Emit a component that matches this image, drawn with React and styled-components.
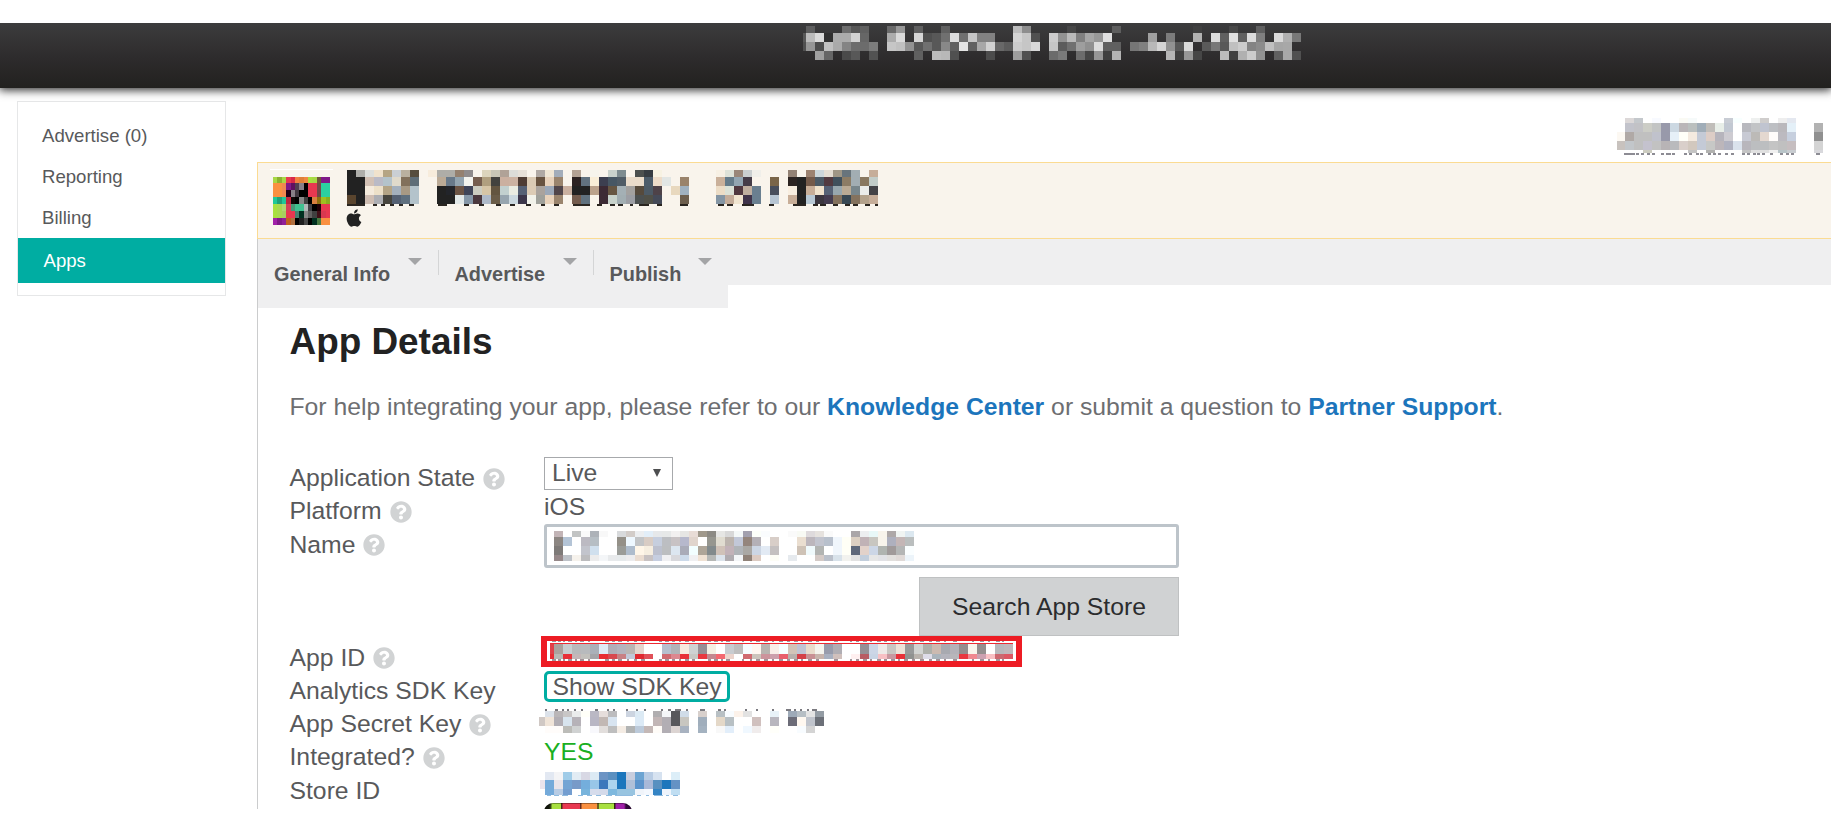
import React from "react";
import styled, { createGlobalStyle } from "styled-components";
import { FaQuestionCircle, FaApple } from "react-icons/fa";

const GlobalStyle = createGlobalStyle`
  body {
    margin: 0;
    background: #fff;
    color: #58595b;
    font-family: "Liberation Sans", Arial, sans-serif;
    font-size: 24.74px;
  }
  * { box-sizing: border-box; }
`;

/* ---------- censored (pixelated) strings ---------- */

const HEADER_TITLE = {
  cell: 9,
  lead: 3,
  rows: [
    [7, "- 5e - - - 6e 57 60 - - 6a 98 - 60 - - 60 - - - - - - - bd 8e - - - - 47 - - - - 5e - - - - - - - - 40 - - - 48 - - 60"],
    [9, "58 bb da 30 ac ac d2 66 - - ac da - d6 50 58 70 dc 70 c6 82 82 - - d4 c6 50 - cc 92 ba 80 a6 98 e0 - - - - a0 - 7c - - b2 - dc 60 e0 60 dc 80 - da b0 78"],
    [9, "50 96 4c c0 aa 84 6c 6c 7c - c6 c0 92 58 70 58 88 60 e4 60 a8 d2 68 5c cc c6 d8 - c6 5c 70 9e 90 dc 60 60 - 76 80 b8 d4 92 58 da - 5a 78 58 c0 cc 84 8c c0 a6 a8"],
    [9, "- - a0 66 - 4a 58 - 52 - - - - 60 - bc b8 50 - - - 4c - - 9e 50 - - 6c 7a - 6c 46 96 40 b4 - - - - - b6 40 96 46 - - bc 40 b0 cc 92 - 60 a8 50"],
  ],
};

const APP_ICON = {
  cell: 4.385,
  rows: [
    [6.2, "a8d845 8cb030 a8d845 e8384f d82848 f08040 e08038 f08840 a8e040 a8d845 705838 801888 801888"],
    [7.1, "fa9040 fa9040 f08850 801888 601060 504050 888088 000 e83850 e83850 784848 2cd0a0 2cd0a0"],
    [6.9, "fa9040 fa9040 f08850 200018 888088 403840 000 000 e83850 e83850 704848 2cd0a0 2cd0a0"],
    [7.1, "20c898 20a078 20c898 c02840 100808 000 888888 404040 000 d88040 907010 a0c020 88b020"],
    [7.1, "a8e040 a8d850 b0d870 d84058 489878 40c090 40c090 b0b8b8 404044 000 200008 e83850 e83850"],
    [6.7, "a8e040 a8d850 a8d060 e83850 e83850 488070 003020 888888 606060 404040 401018 d83850 e83850"],
    [6.9, "a020a8 801888 902098 c06020 b07040 000 202020 484848 000 003020 487840 fa9040 fa9040"],
  ],
};

const APP_TITLE = {
  cell: 9,
  rows: [
    [7, "222 aeaeaa dddfdc f0e2cc b5a585 cacfd4 bab09f 564d3e - f7ecdc aeada8 aeada8 94806f 8f8b8c - dcd4bc c8c6b6 b0a297 dcdcd8 e6e0d8 - b0a9a4 f0e6d4 a3adba - b3a294 - f6f4ec - cad2cc 7e8c90 - 4c504f 363c42 f7f2e2 - - - - - - f7f0e4 dee2d8 998679 cacfd0 f0efea - - - 938275 - 9c8270 ccd6da e4ddd2 9f9685 68747c a2adb3 - c6ad99"],
    [9, "222 222 d2c0b4 babac6 b4c3cb e0dacb 82705b 5f6e78 - - bbaa96 68798a 93a4b0 f3f3ee 765e4f b09f7f 42423e cbb0a0 ccb2a2 4e3c34 dacab4 685340 e8d2bb 9a846d - 2c2222 627280 f9eed8 3c3f50 475764 505c66 eadccb eadccb 4c5c6a eddcc9 e2e6e4 - 9a836b - - - cab09a 647b8a 92a5b2 453c48 - - 7a6549 - 2c2422 222 745a4a 4c5a66 523a40 40505c 8c7c65 a2adb3 8a7860 c2ccc8"],
    [9, "222 222 f4eadc ede0c8 b4a486 a4b0bd a89984 b4c3cb - - 222 22242a 6c5445 3f4458 ccccc0 d6c5a6 635540 c2d0cf eaece2 566175 dccbb5 aaa39d 9ca8b8 50454a cab0a0 222 222 bba28c 3c2a34 675642 a4b0b5 a3a19f 564a3c 4c5a66 4e4248 - e8d8be a0b1c0 - - - ecdcc6 dbe1d7 503840 bfae9f 6a7f90 - 484e5c - f8eee0 222 c8ae98 f0e2cc 566175 98a7ae baaa94 78868c ececea 444347"],
    [9, "5a452e 222 cfbdb2 adaeb3 47453e 556174 5f6f7e b4c3cb - - 222 222 e2e8e8 8697a8 4b383e aeb9c8 6a5c48 97a5af cbd8df 3c364a f2f2ea a0a19b e8d2bb 9a846d - 745c4e 60717e - 3c2a34 c8d2cb a2aeb2 9c9ea4 4c5050 505048 454a58 - - 6e5f4e - - - 8495a4 c4ac9a f0e4d0 40334a 6a7f90 - b6c4d2 - c8ae98 222 b8c8d4 3c363f 453c50 84725e 384854 84725e b4a28c c6ad99"],
  ],
  specks: [[34, 2, "#2a2520", "0:18 26:4 34:4 43:4 52:4 62:5 91:9 117:5 132:5 149:5 163:5 179:5 194:4 207:5 226:17 250:5 263:5 271:5 283:3 292:10 310:5 333:8 371:6 380:6 395:12 422:5 446:13 466:5 473:6 486:5 498:5 506:5 518:5 528:5"]],
};

const ACCOUNT_NAME = {
  cell: 9,
  lead: 8,
  rows: [
    [5, "- dcd8d8 c4c8cc - f8faff - - fafaf4 f6fafa - - - c8ccd4 f8ffff - eef0ef cfcdcc - eeeeee e4e8f0"],
    [9, "- c2c3cb c2c2c6 cccdc6 c2c4c4 9899aa ccd8e2 bab6b8 babfbe a0adb8 c0bdb9 e8eee8 c2c8d2 fff b8b9bf c2c4c6 c0c4d0 bdbfc3 bab8bc e4f0f8 - - b2b2b2"],
    [9, "fcf8f2 b0a9a6 c0c0c0 c0c0c0 c0c2cc 9899aa e6f0f8 fffff8 f4eadf c4cad6 ddcdc6 b6b4bc cdcbd1 fff c8cad4 bcbab7 e4d8d0 fffcfa bcbac0 c6cfde - - 909090"],
    [9, "c8c2be c2c6ca c0c0c0 c4c2ce c2c2c2 b8b4b6 b9babd d9cfca d2c8be c4cad6 c7c8c6 bcb6ba b0b2c0 dae2ec b8b6bc bcbec0 bcbec0 c4c4c4 c0c0c0 c6bec0 - - d4d4d4"],
    [3, "- - - ccccc0 - - - - c4c4c4 - b2b2b0 - - - c4c4c4 e0e0e0 e0e0e0 f0f0f0 b8c4c8 c8ccd0 - - d8d8dc"],
  ],
  specks: [[35, 2, "#8d8c94", "7:3 10:5 15:3 19:3 24:3 30:3 35:3 44:3 49:5 55:3 67:3 72:3 79:3 83:3 91:3 96:3 101:3 108:3 114:3 125:3 130:3 136:3 140:3 145:3 153:3 163:3 169:3 174:3 199:4"]],
};

const NAME_VALUE = {
  cell: 9,
  rows: [
    [6, "c2b4b6 - c2c4c4 fafafa adb2b8 f8f8f8 - d8dadc d2ccc8 eceef0 e2eef8 e6e8ea e6e8e8 f2f0f0 e6e6e4 e8dcd6 a0998c 8c8a84 e6e6e4 d8d8d8 f4f8f8 a2a0ae fcfffa fafcfe - - fafafa f8faf4 dedadc e6e2de fafafa - - aaa6a8 eceef0 e8f8f8 f8f4ec aea8a8 f0f4f2 dce8f0"],
    [9, "8c8682 b4c4d6 fff bcbac2 b6bec4 - - 949088 eef8ff c2c4c6 d8ccc4 c6cede bcbec2 c8c2c4 b6b8cc e0d4cc fff 96968f e0dcd0 bcb4ae c2c8d8 94857c b4b0b6 fff d8cec8 - - eaded0 bcb6bc c2c4ce b8c0cc f0f6fc fffff6 dcd0c2 c0b2b6 c8c6c0 f8f4ec aeb0be c4b6b6 babebe"],
    [9, "7e7a78 fff fff c2c4cc d0e0ee - - 9a9c98 aebccc fff6e8 f6eee0 bcc0ce bcbec0 dce6f0 a9abb8 f2feff aea598 828a8c d0c2b8 c2b2b8 b0b4b8 aaa8a4 ccd6e4 e2eaf4 c4c0c0 - - cec2b6 f0fafc b2b4b2 fff f0f6fc fffff6 5e687a e2d2ca ccd6e6 b0b4b0 a09a9a b4b6b6 fafeff"],
    [6, "968889 bec2c8 f6f2ec bcbcbe ececec f4f6f8 e8eaec e6eaec ececee eadcd0 c8c2c2 c6cee0 f0f0f2 d8d8dc ccdaea f0f0f2 f0e2d4 b6b8b6 dce4ec b0acb0 f4f6f8 908278 dccbc2 fff fdfdf6 - e6eaee fff fff d4cac6 bac0ca d8e2ea f2f2ee e2e2e2 c2cedc e6e6e6 e2e2e6 e2e0de e0dad8 ecf4fa"],
  ],
};

const TEXT_SPECKS = "2:4 8:3 13:2 18:4 25:2 30:4 38:2 55:4 62:3 68:4 77:2 84:3 91:4 109:3 115:4 122:3 129:2 135:4 142:3 158:3 164:4 171:2 176:4 192:2 200:2 206:4 214:4 222:2 229:4 237:3 244:4 251:2 258:4 266:3 284:4 300:2 306:3 313:4 320:2 327:4 334:3 341:4 348:2 354:4 362:3 370:4 379:3 386:4 394:2 403:4 422:2 430:4 438:2 446:4 452:2";

const APP_ID = {
  cell: 9,
  top: 3,
  lead: 4,
  rows: [
    [10, "e0404a aaa29e c8ced0 b8b9bb b8babd aab0b8 deeaf6 b0aeb8 b4b4be bab6b4 e4d6ce fff fff b6c0ce b0b4b8 f6eae0 ced2d2 969096 f4f0e4 fff c8ccd0 bebebe f6fcff fff6f0 b8b4b0 f8eee8 f6ffff d2c4b8 c0c4d4 e8dccc f4f4ee 989cac b0aeb4 fff fff 949096 ccd6e6 eeeae8 c8c6c2 ece2d8 989a9a d2d4d2 aeb0aa ccbab0 a8aab0 b4b2b8 948e8e f8f4ec 948e8e fff b8b8bc c0b8bc"],
    [5, "e82c34 b8b8b4 e83038 c4b6b8 c2c0bc a4a4a8 e82c34 d84850 c88084 c0c8d8 e02830 e05058 fff d06a70 dc8890 e83038 c8c8c4 e83840 c48890 f46870 ecd4cc fff d06a70 ccc4bc cc949c cca0ac e8606c b8b0ac d44048 c89094 c8b4ac a8b0c0 d0c0bc fff fff0f0 b85c64 c8d4e4 f8c0c4 c898a0 e83038 909290 bab4ae dedce8 aab4bc b4b4bc b8b6ba e83840 f08890 cca0b0 f8c0c4 cc6870 dc5864"],
  ],
  specks: [
    [0, 1, "#9a979f", TEXT_SPECKS],
    [2, 1, "#ee2a33", "0:463"],
    [18, 2, "#a19298", TEXT_SPECKS],
  ],
};

const SECRET_KEY = {
  cell: 9,
  top: 2,
  lead: 6,
  rows: [
    [6, "- dce2ea bab6b8 c8c6c6 eaecec fffff8 bab8c4 e6dedc bcbcbe - ccd4e0 dceaf4 - b0aeb0 f4f6f8 58585c d0dce8 - d8d0cc - b8c0c4 f8fcff fcf2ea e2e2e2 - - e8f2f8 - 9eaab8 b6bec4 e4e4e4 949ca4"],
    [9, "d0c8c4 f0e4d8 b2aeb4 d8e4ee b6b2b8 - b8b6c4 c2b8b4 d8e4f0 - fff dceaf6 - c2b6b6 b2aeb4 58585c c8c6c0 - a0aebc - e4d8c8 b8c0c4 fff fff d0c0be - b8b6be - 6c6c78 fff8f0 c0c4cc 6c7078"],
    [7, "- fffcfa fffcfa bcbcb8 d0d2d2 - f8f8fc e2dedc bebebe f4ece4 b2b4b4 bccada c4b8b6 fffcf8 b2aeb4 dcd4d2 a8b2c0 - a4b2c0 - f8f8f8 e2eefa - f0f8ff f0ecec - fffffa - - f8fcff d4d4d4"],
  ],
  specks: [[0, 2, "#7b7a80", "6:2 16:3 23:2 28:2 35:2 42:2 56:3 68:2 74:2 87:2 97:2 105:2 122:2 129:3 136:6 147:2 161:5 179:3 185:2 206:2 217:2 233:2 247:5 255:2 261:2 268:2 273:5"]],
};

const STORE_ID = {
  cell: 9,
  lead: 5,
  rows: [
    [8, "- e2e8f2 f4f4f6 a0cce8 e2ecf4 d8d8e4 dceaf4 6c94c4 5c90c0 1c76bc c8cede 6ca4d2 b8cce4 d6e2f0 - dceef8"],
    [9, "eae4ec 74aada e8e4ea 74a4d4 789ac8 74aedc 98c6e8 3c78bc acd4ee 1c76bc b0c0d8 5c94cc a8b8d8 5890c0 1c76bc 6492c4"],
    [6, "- 74aada b8cce4 749ed0 fff 78b4dc d6dcec d4daea 7eb8de 98c4e0 98c4e0 f0f4fa f4f8fe 3484c4 eef4fc c0def2"],
  ],
  specks: [[23, 1, "#90bbdf", "7:4 14:5 22:6 38:5 47:5 56:5 66:6 75:18 97:4 106:3 114:9 126:3 133:5"]],
};

const toColor = (c) => (c.length === 2 ? `#${c}${c}${c}` : `#${c}`);

const Drawing = styled.svg`
  display: block;
  flex: none;
`;

function Mosaic({ data }) {
  const { cell, lead = cell, top = 0, rows, specks = [] } = data;
  const rects = [];
  let y = top;
  let width = 0;
  rows.forEach(([h, line], r) => {
    let x = 0;
    line.split(" ").forEach((c, i) => {
      const w = i === 0 ? lead : cell;
      if (c !== "-") {
        rects.push(<rect key={`${r}-${i}`} x={x} y={y} width={w} height={h} fill={toColor(c)} />);
      }
      x += w;
    });
    width = Math.max(width, x);
    y += h;
  });
  specks.forEach(([sy, h, fill, list], s) => {
    list.split(" ").forEach((p, i) => {
      const [x, w] = p.split(":").map(Number);
      rects.push(<rect key={`s${s}-${i}`} x={x} y={sy} width={w} height={h} fill={fill} />);
    });
    y = Math.max(y, sy + h);
  });
  return (
    <Drawing width={width} height={y} shapeRendering="crispEdges" aria-hidden="true">
      {rects}
    </Drawing>
  );
}

/* ---------- page frame ---------- */

const Page = styled.div`
  width: 1831px;
  height: 809px;
  padding-top: 23px;
  overflow: hidden;
`;

const TopBar = styled.header`
  height: 65px;
  padding: 3px 0 0 803px;
  background: linear-gradient(#3c3c3d, #2d2b2c 55%, #22211f);
  box-shadow: 0 1px 9px 1px rgba(0, 0, 0, 0.85);
  clip-path: inset(0 0 -14px 0);
`;

const Columns = styled.div`
  display: flex;
  align-items: flex-start;
`;

const Sidebar = styled.nav`
  width: 209px;
  height: 195px;
  margin: 13px 31px 0 17px;
  padding-top: 12.5px;
  border: 1px solid #e6e7e8;
  font-size: 18.6px;
  flex: none;
`;

const SideItem = styled.div`
  height: ${(p) => (p.$active ? 45 : 41.2)}px;
  padding-left: ${(p) => (p.$active ? 25.5 : 24)}px;
  line-height: ${(p) => (p.$active ? 46 : 41)}px;
  color: ${(p) => (p.$active ? "#fff" : "#58595b")};
  background: ${(p) => (p.$active ? "#00ada2" : "transparent")};
`;

const Main = styled.main`
  flex: 1;
  min-width: 0;
`;

const AccountRow = styled.div`
  display: flex;
  justify-content: flex-end;
  height: 74px;
  padding: 30px 8px 0 0;
`;

const Panel = styled.section`
  height: 650px;
`;

const Banner = styled.div`
  display: flex;
  align-items: flex-start;
  height: 77px;
  padding: 6px 0 0 12px;
  background: #f9f4ec;
  border: 1px solid #fbdb92;
  border-right: 0;
`;

const IconFrame = styled.div`
  width: 63px;
  height: 56px;
  margin-right: 14px;
  padding: 7px 0 0 3px;
  border-top: 1px solid #fff;
`;

const BannerText = styled.div`
  padding: 1px 0 0 0;
`;

const AppleMark = styled(FaApple)`
  display: block;
  width: 18px;
  height: 20px;
  margin: 2px 0 0 -2px;
  color: #222;
`;

const PanelBody = styled.div`
  border-left: 1px solid #cbcccd;
  height: 573px;
`;

const NavStrip = styled.div`
  height: 46px;
  background: #efeff0;
`;

const NavTabs = styled.div`
  display: flex;
  width: 470px;
  height: 69px;
  padding: 11px 0 0 16px;
  background: #efeff0;
`;

const Tab = styled.div`
  display: flex;
  width: ${(p) => p.$width}px;
  margin-right: 16px;
  flex: none;
  color: #58595b;
  font-size: 19.9px;
  font-weight: bold;
  line-height: 49px;
  white-space: nowrap;
`;

const TabLabel = styled.span`
  flex: 1;
`;

const TabArrow = styled.i`
  margin: 8px 16px 0 0;
  width: 0;
  height: 0;
  border: 7.5px solid transparent;
  border-top-color: #a3a4a6;
  border-bottom: 0;
`;

const TabDivider = styled.i`
  width: 1px;
  height: 25px;
  background: ${(p) => (p.$hidden ? "transparent" : "#d4d5d6")};
`;

const Content = styled.div`
  padding: 37px 0 0 31.5px;
`;

const Title = styled.h1`
  margin: 0;
  color: #222;
  font-size: 36.9px;
  line-height: 40px;
`;

const Help = styled.p`
  margin: 28px 0 0;
  color: #6d6e71;
  line-height: 33px;
  white-space: nowrap;
`;

const Link = styled.a`
  color: #1c75bc;
  font-weight: bold;
`;

/* ---------- form ---------- */

const Form = styled.div`
  display: flex;
  margin-top: 34px;
`;

const Labels = styled.div`
  width: 254.5px;
  padding-top: 4px;
  flex: none;
`;

const Label = styled.div`
  display: flex;
  align-items: center;
  height: 33.3px;
  margin-top: ${(p) => p.$gap || 0}px;
  line-height: 33px;
  white-space: nowrap;
`;

const HelpIcon = styled(FaQuestionCircle)`
  width: 22px;
  height: 22px;
  margin: 2px 0 0 8px;
  color: #d1d3d4;
`;

const Values = styled.div`
  display: flex;
  flex-direction: column;
  align-items: flex-start;
  width: 635px;
`;

const Select = styled.div`
  display: flex;
  align-items: center;
  justify-content: space-between;
  width: 129px;
  height: 33px;
  padding: 0 11px 1px 7px;
  border: 1px solid #a7a9ac;
`;

const SelectArrow = styled.i`
  border: 4.5px solid transparent;
  border-top: 8px solid #4d4e50;
  border-bottom: 0;
`;

const Value = styled.div`
  height: 34px;
  line-height: 33px;
  color: ${(p) => p.$color || "inherit"};
`;

const Input = styled.div`
  width: 635px;
  height: 44px;
  padding: 4px 0 0 7px;
  border: 3px solid #bdc4ca;
  border-radius: 3px;
`;

const SearchButton = styled.div`
  align-self: flex-end;
  width: 260px;
  height: 59px;
  margin-top: 9px;
  border: 1px solid #bfc1c2;
  background: #d0d2d3;
  color: #2b2c2e;
  line-height: 57px;
  text-align: center;
`;

const Highlight = styled.div`
  width: 481px;
  height: 31px;
  margin: 0 0 0 -3px;
  padding: 0 0 0 3px;
  border: 6px solid #ed1c24;
  border-top-width: 5px;
`;

const KeyButton = styled.div`
  width: 186px;
  height: 31px;
  margin-top: 4px;
  border: 3px solid #00ada2;
  border-radius: 5px;
  line-height: 26px;
  text-align: center;
  white-space: nowrap;
`;

const Spaced = styled.div`
  margin: ${(p) => p.$margin};
`;

const Thumb = styled.div`
  width: 88px;
  height: 60px;
  border-radius: 9px;
  background: linear-gradient(
    90deg, #10140a 0 5px, #3c5018 7px, #a8e040 8px 17px, #4a2a18 17px 18px,
    #e83850 19px 36px, #6a3020 36px 37px, #fa9040 38px 53px, #6a6020 53px 55px,
    #a8e040 55px 70px, #302810 70px 71px, #a020a8 72px 80px, #300838 82px 88px
  );
  box-shadow: inset 0 1px 0 rgba(0, 0, 0, 0.35);
`;

const TABS = [
  ["General Info", 164.5],
  ["Advertise", 139],
  ["Publish", 119.5],
];

export default function App() {
  return (
    <>
      <GlobalStyle />
      <Page>
        <TopBar>
          <Mosaic data={HEADER_TITLE} />
        </TopBar>
        <Columns>
          <Sidebar>
            <SideItem>Advertise (0)</SideItem>
            <SideItem>Reporting</SideItem>
            <SideItem>Billing</SideItem>
            <SideItem $active>Apps</SideItem>
          </Sidebar>
          <Main>
            <AccountRow>
              <Mosaic data={ACCOUNT_NAME} />
            </AccountRow>
            <Panel>
              <Banner>
                <IconFrame>
                  <Mosaic data={APP_ICON} />
                </IconFrame>
                <BannerText>
                  <Mosaic data={APP_TITLE} />
                  <AppleMark />
                </BannerText>
              </Banner>
              <PanelBody>
                <NavStrip>
                  <NavTabs>
                    {TABS.map(([name, width], i) => (
                      <Tab key={name} $width={width}>
                        <TabLabel>{name}</TabLabel>
                        <TabArrow />
                        <TabDivider $hidden={i === 2} />
                      </Tab>
                    ))}
                  </NavTabs>
                </NavStrip>
                <Content>
                  <Title>App Details</Title>
                  <Help>
                    For help integrating your app, please refer to our <Link>Knowledge Center</Link> or submit a
                    question to <Link>Partner Support</Link>.
                  </Help>
                  <Form>
                    <Labels>
                      <Label>Application State<HelpIcon /></Label>
                      <Label>Platform<HelpIcon /></Label>
                      <Label>Name<HelpIcon /></Label>
                      <Label $gap={79.5}>App ID<HelpIcon /></Label>
                      <Label>Analytics SDK Key</Label>
                      <Label>App Secret Key<HelpIcon /></Label>
                      <Label>Integrated?<HelpIcon /></Label>
                      <Label>Store ID</Label>
                    </Labels>
                    <Values>
                      <Select>
                        Live
                        <SelectArrow />
                      </Select>
                      <Value>iOS</Value>
                      <Input>
                        <Mosaic data={NAME_VALUE} />
                      </Input>
                      <SearchButton>Search App Store</SearchButton>
                      <Highlight>
                        <Mosaic data={APP_ID} />
                      </Highlight>
                      <KeyButton>Show SDK Key</KeyButton>
                      <Spaced $margin="7px 0 2px -5px">
                        <Mosaic data={SECRET_KEY} />
                      </Spaced>
                      <Value $color="#1aaf22">YES</Value>
                      <Spaced $margin="3px 0 7px -4px">
                        <Mosaic data={STORE_ID} />
                      </Spaced>
                      <Thumb />
                    </Values>
                  </Form>
                </Content>
              </PanelBody>
            </Panel>
          </Main>
        </Columns>
      </Page>
    </>
  );
}
